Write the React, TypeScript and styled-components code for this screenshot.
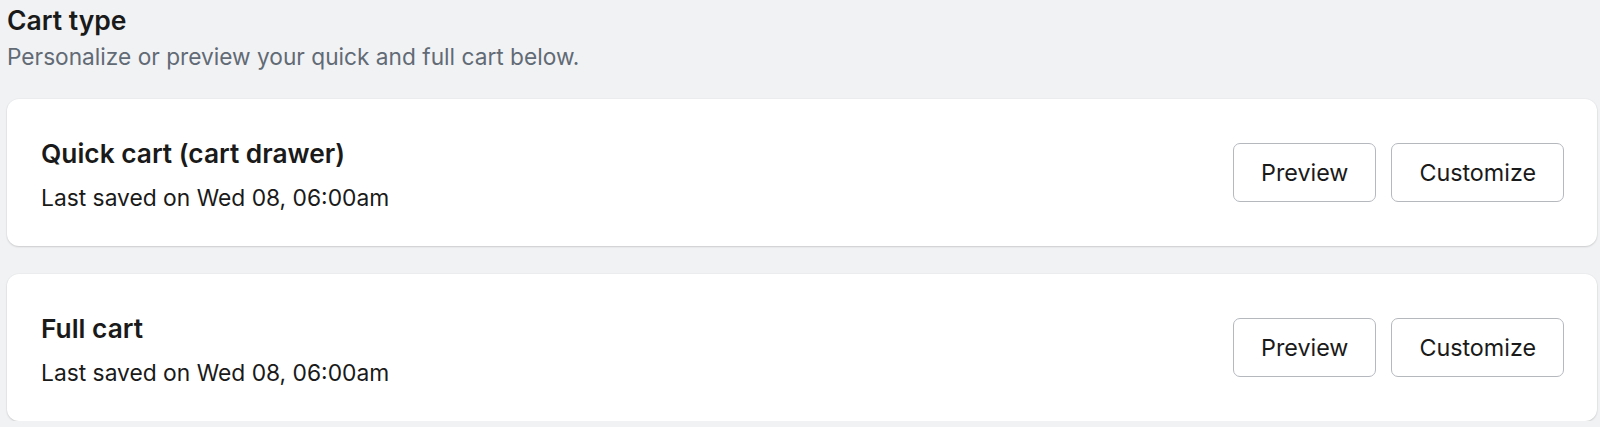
import React from 'react'
import styled, { createGlobalStyle } from 'styled-components'

const GlobalStyle = createGlobalStyle`
  html, body {
    margin: 0;
    padding: 0;
    background: #f1f2f4;
  }
  body {
    font-family: Inter, "Noto Sans", "Liberation Sans", sans-serif;
    color: #1a1a1a;
    -webkit-font-smoothing: antialiased;
  }
`

type CartItem = {
  title: string
  saved: string
}

const carts: CartItem[] = [
  { title: 'Quick cart (cart drawer)', saved: 'Last saved on Wed 08, 06:00am' },
  { title: 'Full cart', saved: 'Last saved on Wed 08, 06:00am' },
]

const App: React.FC = () => {
  return (
    <Page>
      <GlobalStyle />
      <Header>
        <Heading>Cart type</Heading>
        <Subtitle>Personalize or preview your quick and full cart below.</Subtitle>
      </Header>
      <CardList>
        {carts.map((cart) => (
          <Card key={cart.title}>
            <CardText>
              <CardTitle>{cart.title}</CardTitle>
              <SavedAt>{cart.saved}</SavedAt>
            </CardText>
            <Actions>
              <Button>Preview</Button>
              <Button>Customize</Button>
            </Actions>
          </Card>
        ))}
      </CardList>
    </Page>
  )
}

export default App

const Page = styled.div`
  padding: 4px 3px 0 7px;
`

const Header = styled.div`
  display: flex;
  flex-direction: column;
  gap: 7px;
`

const Heading = styled.h2`
  margin: 0;
  font-size: 26.5px;
  line-height: 32px;
  font-weight: 600;
  color: #1a1a1a;
`

const Subtitle = styled.p`
  margin: 0;
  font-size: 22.7px;
  line-height: 28px;
  color: #616a75;
`

const CardList = styled.div`
  display: flex;
  flex-direction: column;
  gap: 28px;
  margin-top: 28px;
`

const Card = styled.div`
  display: flex;
  align-items: center;
  justify-content: space-between;
  height: 147px;
  box-sizing: border-box;
  padding: 0 33px 0 34px;
  background: #ffffff;
  border-radius: 12px;
  box-shadow: 0 1px 2px rgba(0, 0, 0, 0.14), 0 0 0 1px rgba(0, 0, 0, 0.02);
`

const CardText = styled.div`
  display: flex;
  flex-direction: column;
  gap: 13px;
  padding-top: 5px;
`

const CardTitle = styled.h3`
  margin: 0;
  font-size: 26.3px;
  line-height: 32px;
  font-weight: 600;
  color: #1a1a1a;
`

const SavedAt = styled.p`
  margin: 0;
  font-size: 22.8px;
  line-height: 30px;
  color: #1a1a1a;
`

const Actions = styled.div`
  display: flex;
  gap: 15px;
`

const Button = styled.button`
  height: 59px;
  padding: 0 27px;
  background: #ffffff;
  border: 1px solid #b5b9be;
  border-radius: 7px;
  font-family: inherit;
  font-size: 23.3px;
  color: #1a1a1a;
  cursor: pointer;
`
